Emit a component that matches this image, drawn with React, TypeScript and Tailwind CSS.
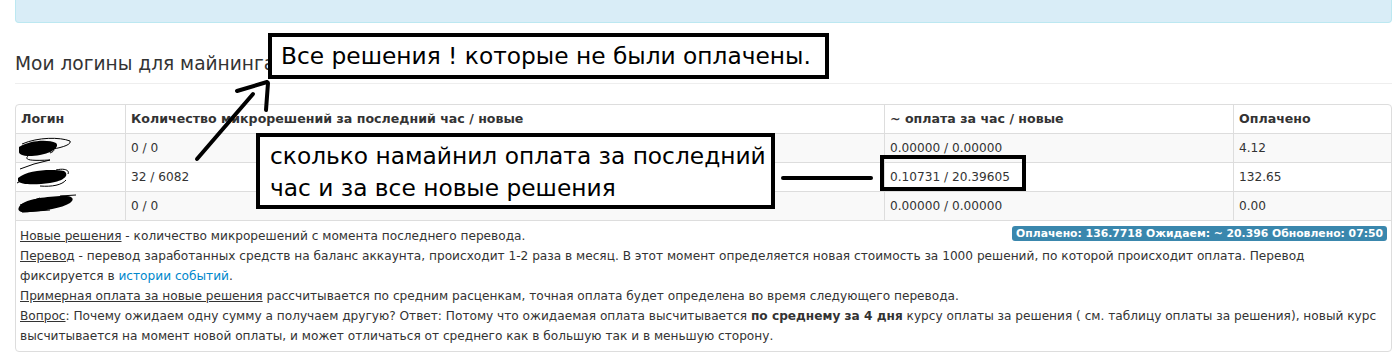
import React from "react";

const rows = [
  { count: "0 / 0", pay: "0.00000 / 0.00000", paid: "4.12", striped: true },
  { count: "32 / 6082", pay: "0.10731 / 20.39605", paid: "132.65", striped: false },
  { count: "0 / 0", pay: "0.00000 / 0.00000", paid: "0.00", striped: true },
];

function Scribbles() {
  return (
    <svg className="absolute left-0 top-0" width="90" height="230" viewBox="0 0 90 230" fill="none">
      {/* row 1 */}
      <path d="M19 147 C30 140 48 139 56 143 C60 147 52 153 40 155 C28 157 18 156 19 151 Z" fill="#000" />
      <path d="M22 144 C38 137 60 137 70 141 C72 145 60 148 48 150 M44 148 C52 147 58 150 50 153" stroke="#000" strokeWidth="1" />
      <path d="M28 156 C24 160 30 161 50 160 L34 164 L20 169" stroke="#000" strokeWidth="1" />
      {/* row 2 */}
      <path d="M18 178 C28 170 50 169 64 171 C70 175 64 181 50 183 C36 185 20 185 18 181 Z" fill="#000" />
      <path d="M17 183 L30 176 M56 170 C64 168 70 170 68 174 M40 186 C52 187 62 185 66 180" stroke="#000" strokeWidth="1" />
      {/* row 3 */}
      <path d="M19 207 C24 199 44 197 60 196 C72 195 76 199 70 203 C62 208 44 211 30 212 C20 213 17 211 19 207 Z" fill="#000" />
      <path d="M20 205 L40 198 M60 196 L76 195 M22 212 L50 210" stroke="#000" strokeWidth="1" />
    </svg>
  );
}

function Annotations() {
  return (
    <>
      <svg className="pointer-events-none absolute left-0 top-0" width="1396" height="360" viewBox="0 0 1396 360" fill="none">
        <g stroke="#000" strokeWidth="4" strokeLinecap="round">
          <line x1="197" y1="159" x2="253" y2="94" />
          <line x1="237" y1="91" x2="267" y2="82" />
          <line x1="268" y1="83" x2="266" y2="110" />
          <line x1="783" y1="178" x2="871" y2="178" />
        </g>
      </svg>
      <div className="absolute left-[268px] top-[33px] flex h-[46px] w-[561px] items-center border-[4px] border-black bg-white pl-[9px] font-['DejaVu_Sans',sans-serif] text-[23.3px] leading-none text-black">
        Все решения ! которые не были оплачены.
      </div>
      <div className="absolute left-[256px] top-[133px] h-[76px] w-[519px] border-[4px] border-black bg-white pl-[10px] pt-[3px] font-['DejaVu_Sans',sans-serif] text-[23.3px] leading-[32px] text-black">
        <div>сколько намайнил оплата за последний</div>
        <div>час и за все новые решения</div>
      </div>
      <div className="absolute left-[880px] top-[155px] h-[36px] w-[146px] border-[4px] border-black" />
    </>
  );
}

export default function App() {
  return (
    <div className="relative h-[360px] w-[1396px] overflow-hidden bg-white font-['DejaVu_Sans',sans-serif] text-[12.15px] text-[#333]">
      <div className="pl-[15px] pr-[4px]">
        {/* info alert, mostly scrolled away */}
        <div className="h-[23px] rounded-b-[4px] border border-t-0 border-[#bce8f1] bg-[#d9edf7]" />

        <h3 className="mt-[26px] text-[18.6px] leading-[30px] text-[#333]">Мои логины для майнинга</h3>
        <div className="mt-[4px] border-t border-[#eee]" />

        <div className="relative mt-[20px] rounded-[4px] border border-[#ddd]">
          {/* header */}
          <div className="grid h-[28px] grid-cols-[109px_759px_349px_1fr] text-[12.6px] font-bold">
            <div className="flex items-center pl-[5px]">Логин</div>
            <div className="flex items-center border-l border-[#ddd] pl-[5px]">Количество микрорешений за последний час / новые</div>
            <div className="flex items-center border-l border-[#ddd] pl-[5px]">~ оплата за час / новые</div>
            <div className="flex items-center border-l border-[#ddd] pl-[5px]">Оплачено</div>
          </div>
          {rows.map((r, i) => (
            <div
              key={i}
              className={
                "grid h-[29px] grid-cols-[109px_759px_349px_1fr] border-t border-[#ddd] " +
                (r.striped ? "bg-[#f9f9f9]" : "bg-white")
              }
            >
              <div className="flex items-center pl-[5px]" />
              <div className="flex items-center border-l border-[#ddd] pl-[5px]">{r.count}</div>
              <div className="flex items-center border-l border-[#ddd] pl-[5px]">{r.pay}</div>
              <div className="flex items-center border-l border-[#ddd] pl-[5px]">{r.paid}</div>
            </div>
          ))}

          {/* legend */}
          <div className="border-t border-[#ddd] px-[4px] pb-[5px] pt-[5px] leading-[20px]">
            <span className="float-right mt-[0px] rounded-[3px] bg-[#3a87ad] px-[4px] text-[10.8px] font-bold leading-[15px] text-white">
              Оплачено: 136.7718 Ожидаем: ~ 20.396 Обновлено: 07:50
            </span>
            <div>
              <span className="underline">Новые решения</span> - количество микрорешений с момента последнего перевода.
            </div>
            <div>
              <span className="underline">Перевод</span> - перевод заработанных средств на баланс аккаунта, происходит 1-2 раза в месяц. В этот момент определяется новая стоимость за 1000 решений, по которой происходит оплата. Перевод фиксируется в{" "}
              <span className="text-[#0088cc]">истории событий</span>.
            </div>
            <div>
              <span className="underline">Примерная оплата за новые решения</span> рассчитывается по средним расценкам, точная оплата будет определена во время следующего перевода.
            </div>
            <div>
              <span className="underline">Вопрос</span>: Почему ожидаем одну сумму а получаем другую? Ответ: Потому что ожидаемая оплата высчитывается{" "}
              <b>по среднему за 4 дня</b> курсу оплаты за решения ( см. таблицу оплаты за решения), новый курс высчитывается на момент новой оплаты, и может отличаться от среднего как в большую так и в меньшую сторону.
            </div>
          </div>
        </div>
      </div>

      <Scribbles />
      <Annotations />
    </div>
  );
}
